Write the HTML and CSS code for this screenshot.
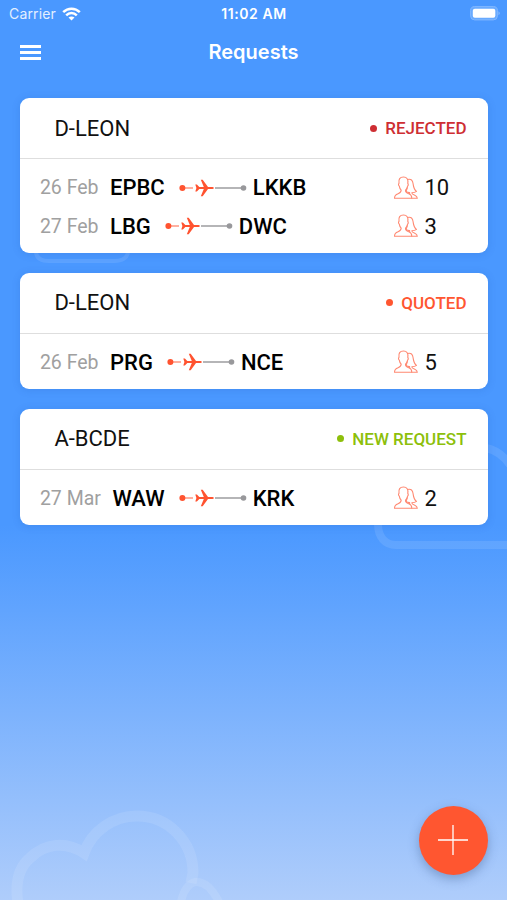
FILE: index.html
```html
<!DOCTYPE html>
<html lang="en">
<head>
  <meta charset="UTF-8" />
  <meta name="viewport" content="width=device-width, initial-scale=1" />
  <title>Requests</title>
  <link rel="stylesheet" href="styles.css">
</head>
<body>
  <svg class="sprite" width="0" height="0">
    <symbol id="route" viewBox="0 0 68 18">
      <path d="M4 9h10" stroke="#ff8f77" stroke-width="1.4" />
      <circle cx="3.4" cy="9" r="3" fill="#ff5330" />
      <path d="M36 9h28" stroke="#a8a8aa" stroke-width="1.7" />
      <circle cx="64.5" cy="9" r="2.8" fill="#98989b" />
      <path fill="#ff5330" d="M16.300 5.500h1.600l2.400 2.500h4.500L21.800 .7h1.900L29 8h4.500q1.300 .2 1.300 1t-1.300 1H29l-5.300 7.300h-1.900l3-7.300h-4.500l-2.400 2.500h-1.600L17.400 9z" />
    </symbol>
    <symbol id="people" viewBox="0 0 26 24">
      <g fill="none" stroke="#ff8972" stroke-width="1.1" stroke-linejoin="round" stroke-linecap="round">
        <path d="M1.500 22.300h17.200c.2-2.800-.6-3.800-3-4.600-2.300-.8-3.200-1.300-3.200-3.500 1.300-1 1.800-2.500 2-4 .9-.6 1-2 .3-2.700.6-4-.8-6.500-4.300-6.500C6.800 1 5.400 3.300 6 7.300c-.8.800-.6 2.100.3 2.800.2 1.600.8 3 1.900 4 0 2.200-.7 2.800-3.100 3.600-2.700.9-3.700 1.900-3.600 4.600z" />
        <path d="M14.500 3.500c3.600-1 5.200 1 5.600 4.200.4 3 .5 5.700 3.400 7.700-1.200 1-2.700 1.300-4.700 1.300 0 1.500 1.200 1.800 3 2.500 1.500.6 2.400 1.400 2.500 3.100h-5.500M14.300 11.500c-.3 1.700-.8 2.800-1.400 3.900 1.200.8 2.200 1.100 3.700 1.200v1.300" />
      </g>
    </symbol>
  </svg>

  <div class="screen">
    <svg class="clouds" width="507" height="900" viewBox="0 0 507 900">
      <path d="M36 251c0 7 5 10 13 10h65c8 0 14-3 14-10" stroke-width="4" />
      <path d="M486 448c10 2 18 8 24 17M378 524c0 13 7 21 18 21h111" stroke-width="8" />
      <path d="M18 904c-3-20 0-36 12-46 15-15 36-17 54-5 8-22 29-37 53-37 31 0 56 25 56 57l-2 10" stroke-width="11" />
      <path d="M181 902c2-10 7-18 14-20 9-1 17 6 24 20" stroke-width="8" />
    </svg>

    <div class="status-bar">
      <div class="carrier">
        <span>Carrier</span>
        <svg width="19" height="14" viewBox="0 0 19 14">
          <g fill="none" stroke="#fff" stroke-width="2.500">
            <path d="M1.200 5.100c4.700-4.600 11.900-4.600 16.600 0" />
            <path d="M4.200 8.300c3-3 7.600-3 10.600 0" />
          </g>
          <path fill="#fff" d="M6.500 10.600c1.700-1.600 4.300-1.600 6 0l-3 3z" />
        </svg>
      </div>
      <div class="time">11:02 AM</div>
      <div class="battery">
        <svg width="32" height="15" viewBox="0 0 32 15">
          <rect x="1.600" y=".6" width="26.800" height="13.300" rx="4" fill="#68aaff" stroke="#82b8ff" />
          <rect x="3.800" y="2.700" width="22.500" height="9" rx="2" fill="#fff" />
          <path d="M29.500 5.200q2.500 2 0 4z" fill="#8bbdff" />
        </svg>
      </div>
    </div>

    <div class="nav-bar">
      <div class="menu"><i></i><i></i><i></i></div>
      <h1>Requests</h1>
    </div>

    <div class="requests">
      <div class="card">
        <div class="card-header">
          <span class="aircraft">D-LEON</span>
          <span class="status rejected">REJECTED</span>
        </div>
        <div class="card-body">
          <div class="leg">
            <span class="date">26 Feb</span>
            <span class="airport">EPBC</span>
            <svg class="route"><use href="#route" /></svg>
            <span class="airport">LKKB</span>
            <span class="pax"><svg><use href="#people" /></svg>10</span>
          </div>
          <div class="leg">
            <span class="date">27 Feb</span>
            <span class="airport">LBG</span>
            <svg class="route"><use href="#route" /></svg>
            <span class="airport">DWC</span>
            <span class="pax"><svg><use href="#people" /></svg>3</span>
          </div>
        </div>
      </div>

      <div class="card">
        <div class="card-header">
          <span class="aircraft">D-LEON</span>
          <span class="status quoted">QUOTED</span>
        </div>
        <div class="card-body">
          <div class="leg">
            <span class="date">26 Feb</span>
            <span class="airport">PRG</span>
            <svg class="route"><use href="#route" /></svg>
            <span class="airport">NCE</span>
            <span class="pax"><svg><use href="#people" /></svg>5</span>
          </div>
        </div>
      </div>

      <div class="card">
        <div class="card-header">
          <span class="aircraft">A-BCDE</span>
          <span class="status new">NEW REQUEST</span>
        </div>
        <div class="card-body">
          <div class="leg">
            <span class="date">27 Mar</span>
            <span class="airport">WAW</span>
            <svg class="route"><use href="#route" /></svg>
            <span class="airport">KRK</span>
            <span class="pax"><svg><use href="#people" /></svg>2</span>
          </div>
        </div>
      </div>
    </div>

    <button class="add" aria-label="Add request">
      <svg width="30" height="30" viewBox="0 0 30 30">
        <path d="M15 0v30M0 15h30" stroke="#fff" stroke-width="1.300" />
      </svg>
    </button>
  </div>
</body>
</html>
```

FILE: styles.css
```css
:root {
  --orange: #ff5630;
  --red: #ce2e33;
  --green: #8dbf0b;
  --grey: #a0a0a0;
}

* {
  box-sizing: border-box;
}

body {
  margin: 0;
  font-family: Roboto, sans-serif;
}

.sprite {
  position: absolute;
}

.screen {
  position: relative;
  height: 900px;
  overflow: hidden;
  background: linear-gradient(#4a98ff 0, #4a98ff 525px, #afcdfb 900px);
}

.clouds {
  position: absolute;
  top: 0;
  left: 0;
  fill: none;
  stroke: rgba(255, 255, 255, 0.1);
}

.status-bar {
  position: relative;
  display: grid;
  grid-template-columns: 1fr auto 1fr;
  align-items: center;
  height: 27px;
  padding: 0 6px 0 9px;
  font-family: Inter, sans-serif;
  font-size: 14px;
  color: #fff;
}

.carrier {
  display: flex;
  align-items: center;
  gap: 6px;
  letter-spacing: 0.15px;
  color: #e3efff;
}

.carrier svg {
  display: block;
}

.time {
  margin-right: 2px;
  font-weight: 600;
  letter-spacing: 0.55px;
}

.battery {
  display: flex;
  justify-content: flex-end;
}

.nav-bar {
  position: relative;
  display: grid;
  grid-template-columns: 1fr auto 1fr;
  align-items: center;
  height: 50px;
  padding: 0 20px;
  color: #fff;
}

.menu {
  display: flex;
  flex-direction: column;
  gap: 3px;
  width: 21px;
}

.menu i {
  height: 3px;
  background: #fff;
}

h1 {
  margin: 0;
  font-family: Inter, sans-serif;
  font-size: 20px;
  font-weight: 600;
}

.requests {
  position: relative;
  display: flex;
  flex-direction: column;
  gap: 19.500px;
  padding: 21.400px 19.500px 0 20.400px;
}

.card {
  background: #fff;
  border-radius: 9px;
  box-shadow: 0 1px 8px rgba(20, 70, 150, 0.15);
}

.card-header {
  display: flex;
  align-items: center;
  justify-content: space-between;
  height: 61px;
  padding: 0 21px 0 34px;
  border-bottom: 1px solid #dedede;
}

.aircraft {
  font-size: 22px;
  color: #111;
}

.status {
  display: flex;
  align-items: center;
  gap: 8px;
  font-size: 17px;
  font-weight: 500;
}

.status::before {
  content: "";
  width: 7px;
  height: 7px;
  border-radius: 50%;
  background: currentColor;
}

.rejected {
  color: var(--red);
}

.quoted {
  color: var(--orange);
}

.new {
  color: var(--green);
}

.card-body {
  padding: 9px 21px 8px 19.500px;
}

.leg {
  display: flex;
  align-items: center;
  height: 38.500px;
}

.date {
  margin-right: 11.500px;
  font-size: 19.500px;
  color: var(--grey);
}

.airport {
  font-size: 22px;
  font-weight: 500;
  color: #000;
}

.route {
  width: 68px;
  height: 18px;
  margin: 0 6px 0 14px;
}

.pax {
  display: flex;
  align-items: center;
  gap: 6px;
  width: 74px;
  margin-left: auto;
  font-size: 22px;
  color: #111;
}

.pax svg {
  width: 26px;
  height: 24px;
}

.add {
  position: absolute;
  right: 19.500px;
  bottom: 25.500px;
  display: flex;
  align-items: center;
  justify-content: center;
  width: 69px;
  height: 69px;
  padding: 0;
  border: none;
  border-radius: 50%;
  background: var(--orange);
  box-shadow: 0 4px 11px rgba(40, 70, 120, 0.35);
}
```
